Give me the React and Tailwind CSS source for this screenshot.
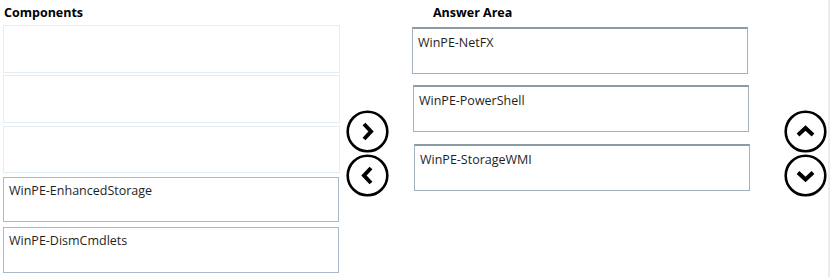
const font = { fontFamily: '"Segoe UI", "Open Sans", "Liberation Sans", sans-serif' };

const CircleBtn = ({ dir }) => {
  const paths = {
    right: "M18 14 L25 21.5 L18 29",
    left: "M25 14 L18 21.5 L25 29",
    up: "M14 25 L21.5 18 L29 25",
    down: "M14 18.5 L21.5 25.5 L29 18.5",
  };
  return (
    <svg width="43" height="43" viewBox="0 0 43 43" className="block">
      <circle cx="21.5" cy="21.5" r="19.8" fill="white" stroke="black" strokeWidth="2.6" />
      <path d={paths[dir]} fill="none" stroke="black" strokeWidth="4" strokeLinecap="butt" strokeLinejoin="miter" />
    </svg>
  );
};

const EmptySlot = ({ h, mt }) => (
  <div className={`w-[337px] border border-[#e3edf4] bg-white ${h} ${mt}`} />
);

const Item = ({ label, h, mt }) => (
  <div className={`w-[336px] border border-[#a9b8cc] bg-white pl-[5px] pt-[4px] text-[12.5px] text-[#1e1e1e] leading-[18px] ${h} ${mt}`}>
    {label}
  </div>
);

const Answer = ({ label, mt, ml }) => (
  <div
    className={`w-[336px] h-[47px] border border-[#a4b0bb] border-t-2 border-t-[#8d9ba6] bg-white pl-[5px] pt-[5px] text-[12.5px] text-[#1e1e1e] leading-[18px] ${mt} ${ml}`}
  >
    {label}
  </div>
);

export default function App() {
  return (
    <div style={font} className="w-[830px] h-[277px] bg-white flex overflow-hidden">
      {/* components */}
      <div className="w-[343px] pl-[3px] pt-[4px] shrink-0">
        <div className="h-[21px] pl-[1px] text-[12.5px] font-bold text-black leading-[18px]">Components</div>
        <EmptySlot h="h-[48px]" mt="" />
        <EmptySlot h="h-[48px]" mt="mt-[2px]" />
        <EmptySlot h="h-[47px]" mt="mt-[3px]" />
        <Item label="WinPE-EnhancedStorage" h="h-[45px]" mt="mt-[4px]" />
        <Item label="WinPE-DismCmdlets" h="h-[46px]" mt="mt-[5px]" />
      </div>

      {/* move buttons */}
      <div className="w-[69px] shrink-0 pl-[3px] pt-[110px] flex flex-col gap-[1px]">
        <CircleBtn dir="right" />
        <CircleBtn dir="left" />
      </div>

      {/* answer area */}
      <div className="w-[370px] shrink-0 pt-[4px]">
        <div className="h-[21px] pl-[21px] text-[12.5px] font-bold text-black leading-[18px]">Answer Area</div>
        <Answer label="WinPE-NetFX" mt="mt-[2px]" ml="" />
        <Answer label="WinPE-PowerShell" mt="mt-[11px]" ml="ml-[1px]" />
        <Answer label="WinPE-StorageWMI" mt="mt-[12px]" ml="ml-[2px]" />
      </div>

      {/* order buttons */}
      <div className="flex-1 pl-[2px] pt-[110px] flex flex-col gap-[1px] border-r-2 border-[#ececec]">
        <CircleBtn dir="up" />
        <CircleBtn dir="down" />
      </div>
    </div>
  );
}
